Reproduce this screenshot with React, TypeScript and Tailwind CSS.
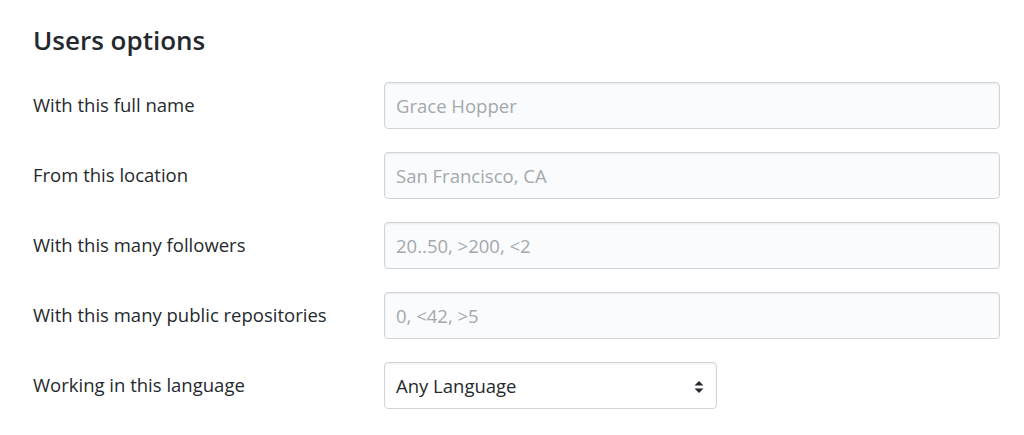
import React from "react";

const rows = [
  { label: "With this full name", placeholder: "Grace Hopper" },
  { label: "From this location", placeholder: "San Francisco, CA" },
  { label: "With this many followers", placeholder: "20..50, >200, <2" },
  { label: "With this many public repositories", placeholder: "0, <42, >5" },
];

export default function App() {
  return (
    <div
      className="w-[1024px] h-[435px] bg-white pl-[33px] pr-[24px] pt-[22px] text-[#24292e]"
      style={{ fontFamily: '"Open Sans", "Noto Sans", sans-serif' }}
    >
      <h3 className="text-[26px] font-semibold leading-[36px] m-0">Users options</h3>
      <div className="mt-[24px] flex flex-col gap-[23px]">
        {rows.map((r) => (
          <div key={r.label} className="flex items-center">
            <label className="w-[351px] shrink-0 text-[18.5px] leading-[26px] pb-[2px]">{r.label}</label>
            <input
              className="w-[616px] h-[47px] rounded-[4px] border border-[#d1d5da] bg-[#fafbfc] px-[11px] text-[18.5px] text-[#24292e] placeholder:text-[#a3a8ad] outline-none shadow-[inset_0_1px_2px_rgba(27,31,35,0.075)]"
              placeholder={r.placeholder}
            />
          </div>
        ))}
        <div className="flex items-center">
          <label className="w-[351px] shrink-0 text-[18.5px] leading-[26px] pb-[2px]">Working in this language</label>
          <div className="relative w-[333px] h-[47px] rounded-[4px] border border-[#d1d5da] bg-white flex items-center px-[11px] shadow-[inset_0_1px_2px_rgba(27,31,35,0.075)]">
            <span className="text-[18.5px] text-[#24292e]">Any Language</span>
            <svg className="absolute right-[12px] top-[18px]" width="10" height="12" viewBox="0 0 10 12">
              <path d="M5 0 L9.5 4.5 H0.5 Z" fill="#24292e" />
              <path d="M5 12 L9.5 7.5 H0.5 Z" fill="#24292e" />
            </svg>
          </div>
        </div>
      </div>
    </div>
  );
}
